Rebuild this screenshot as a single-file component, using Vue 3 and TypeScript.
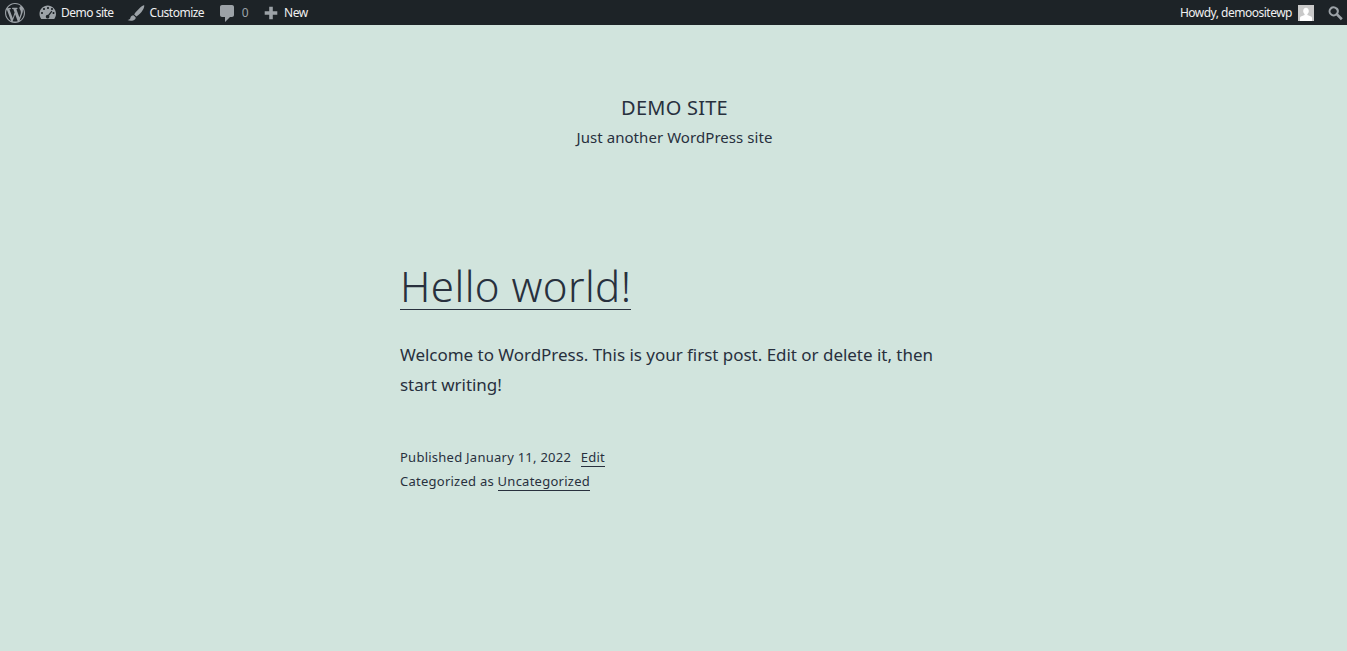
<script setup lang="ts">
const siteName: string = 'DEMO SITE'
</script>

<template>
  <div class="page">
    <header class="adminbar">
      <nav class="bar-left">
        <svg class="ic logo" viewBox="0 0 20 20"><path d="M20 10c0-5.510-4.490-10-10-10C4.480 0 0 4.490 0 10c0 5.520 4.480 10 10 10 5.510 0 10-4.480 10-10zM7.780 15.370L4.370 6.220c.55-.02 1.170-.08 1.170-.08.5-.06.44-1.130-.06-1.110 0 0-1.450.11-2.370.11-.18 0-.37 0-.58-.01C4.120 2.690 6.890 1.050 10 1.050c2.320 0 4.430.87 6.030 2.320-.68-.11-1.650.39-1.650 1.580 0 .74.45 1.360.9 2.100.35.61.55 1.360.55 2.460 0 1.490-1.400 5-1.400 5l-3.030-8.370c.54-.02.82-.17.82-.17.5-.05.44-1.250-.06-1.220 0 0-1.440.12-2.380.12-.87 0-2.330-.12-2.330-.12-.5-.03-.56 1.200-.06 1.220l.92.080 1.260 3.410zM17.410 10c.24-.64.740-1.870.43-4.250.7 1.290 1.050 2.710 1.050 4.250 0 3.290-1.730 6.240-4.400 7.780.97-2.590 1.940-5.210 2.920-7.780zM6.100 18.090C3.120 16.650 1.110 13.530 1.110 10c0-1.300.23-2.480.72-3.590C3.250 10.300 4.670 14.200 6.100 18.090zm4.030-6.910l2.580 6.970c-.86.290-1.740.45-2.710.45-.81 0-1.610-.12-2.360-.34 .84-2.370 1.670-4.720 2.490-7.080z" /></svg>
        <svg class="ic dash" viewBox="0 0 20 20"><path d="M3.760 16h12.480c1.100-1.430 1.760-3.210 1.760-5.150C18 6.240 14.280 2.500 9.700 2.500S1.500 6.240 1.500 10.850c0 1.940.66 3.720 1.760 5.150zM10 4c.55 0 1 .45 1 1s-.45 1-1 1-1-.45-1-1 .45-1 1-1zM6 5c.55 0 1 .45 1 1s-.45 1-1 1-1-.45-1-1 .45-1 1-1zm8 0c.55 0 1 .45 1 1s-.45 1-1 1-1-.45-1-1 .45-1 1-1zm-.6 2.800l.9.6-3.200 4.300c.2.300.3.600.3 1 0 1-.8 1.800-1.800 1.800s-1.800-.8-1.800-1.800 1-2 2.200-1.800zM4 9c.55 0 1 .45 1 1s-.45 1-1 1-1-.45-1-1 .45-1 1-1zm11.500 0c.55 0 1 .45 1 1s-.45 1-1 1-1-.45-1-1 .45-1 1-1z" fill-rule="evenodd" /></svg>
        <span class="lbl site">Demo site</span>
        <svg class="ic brush" viewBox="0 0 20 20"><path d="M19 1.500c-.6-.5-3.300 1.500-6.200 4.300-2.300 2.200-4 4.300-4.800 5.800l2.400 2.200c1.500-.9 3.600-2.700 5.700-5 2.700-3 3.500-6.700 2.900-7.300zM7.200 12.500c-1.800.1-3 1.100-3.400 2.700-.3 1.500-1.300 2.400-3.300 2.600 2.500 1.200 6.300 1.200 8.200-.6 1-1 1.100-1.800.8-2.600z" /></svg>
        <span class="lbl cust">Customize</span>
        <svg class="ic comment" viewBox="0 0 20 20"><path d="M5 2h10c1.100 0 2 .9 2 2v8c0 1.100-.9 2-2 2h-2l-5 5v-5H5c-1.100 0-2-.9-2-2V4c0-1.100.9-2 2-2z" /></svg>
        <span class="lbl count">0</span>
        <svg class="ic plus" viewBox="0 0 20 20"><path d="M17 8v4h-5v5H8v-5H3V8h5V3h4v5h5z" /></svg>
        <span class="lbl new">New</span>
      </nav>
      <div class="bar-right">
        <span class="lbl">Howdy, demoositewp</span>
        <span class="avatar">
          <svg viewBox="0 0 16 16"><rect width="16" height="16" fill="#c9c9c9" /><path d="M8 2.800c1.700 0 2.800 1.300 2.800 3.200 0 1.300-.6 2.500-1.400 3.100v.9l3.700 1.500c.5.200.9.800.9 1.500v3H2v-3c0-.7.400-1.300.9-1.500L6.600 10v-.9C5.800 8.500 5.200 7.300 5.200 6c0-1.900 1.100-3.200 2.800-3.200z" fill="#fff" /></svg>
        </span>
        <svg class="ic search" viewBox="0 0 20 20"><path d="M12.140 4.780a5 5 0 1 0-7.070 7.070 5 5 0 0 0 6.200.72l4.600 4.600 1.900-1.900-4.600-4.600a5 5 0 0 0-.73-5.890zm-1.400 5.660a3 3 0 1 1-4.250-4.250 3 3 0 0 1 4.250 4.250z" /></svg>
      </div>
    </header>

    <main class="content">
      <div class="branding">
        <p class="site-title">{{ siteName }}</p>
        <p class="tagline">Just another WordPress site</p>
      </div>
      <article class="post">
        <h1 class="post-title"><a>Hello world!</a></h1>
        <p class="post-body">Welcome to WordPress. This is your first post. Edit or delete it, then start writing!</p>
        <footer class="meta">
          <div>Published January 11, 2022 <a class="edit">Edit</a></div>
          <div>Categorized as <a>Uncategorized</a></div>
        </footer>
      </article>
    </main>
  </div>
</template>

<style>
html, body { margin: 0; background: #d1e4dd; }
</style>

<style scoped>
.page {
  min-height: 651px;
  background: #d1e4dd;
  color: #28303d;
  font-family: "Noto Sans", "Open Sans", sans-serif;
}
.adminbar {
  height: 25px;
  background: #1d2327;
  color: #f0f0f1;
  display: flex;
  justify-content: space-between;
  align-items: center;
  font-size: 12px;
  letter-spacing: -0.5px;
}
.bar-left, .bar-right { display: flex; align-items: center; }
.bar-left { padding-left: 5px; }
.bar-right { padding-right: 2.5px; }
.ic { fill: #9ca2a7; flex: none; display: block; }
.logo { width: 20px; height: 20px; }
.dash { width: 20px; height: 20px; margin-left: 13px; }
.site { margin-left: 3px; }
.brush { width: 18px; height: 18px; margin-left: 13.5px; }
.cust { margin-left: 4.5px; }
.comment { width: 20px; height: 20px; margin-left: 12.5px; }
.count { margin-left: 5px; color: #9ca2a7; }
.plus { width: 18px; height: 18px; margin-left: 13.5px; }
.new { margin-left: 4.5px; }
.avatar { width: 16px; height: 16px; margin-left: 6px; display: block; }
.avatar svg { display: block; width: 16px; height: 16px; }
.search { width: 20px; height: 20px; margin-left: 10.5px; }

.content { display: flex; flex-direction: column; align-items: center; }
.branding { text-align: center; padding-top: 69px; padding-left: 2px; }
.site-title { margin: 0; font-size: 20px; line-height: 28px; letter-spacing: 0.25px; }
.tagline { margin: 3px 0 0; font-size: 15px; line-height: 24px; letter-spacing: 0.06px; }
.post { width: 547px; padding-top: 111px; }
.post-title { margin: 0; font-size: 42px; font-weight: 300; line-height: 52px; letter-spacing: 0.42px; }
.post-title a { display: inline-block; border-bottom: 1px solid #28303d; line-height: 47px; }
.post-body { margin: 28px 0 0; font-size: 17px; line-height: 30px; width: 540px; letter-spacing: -0.03px; }
.meta { margin-top: 45px; font-size: 13px; line-height: 24px; letter-spacing: 0.25px; }
.meta a { border-bottom: 1px solid #28303d; }
.edit { margin-left: 6px; }
</style>
